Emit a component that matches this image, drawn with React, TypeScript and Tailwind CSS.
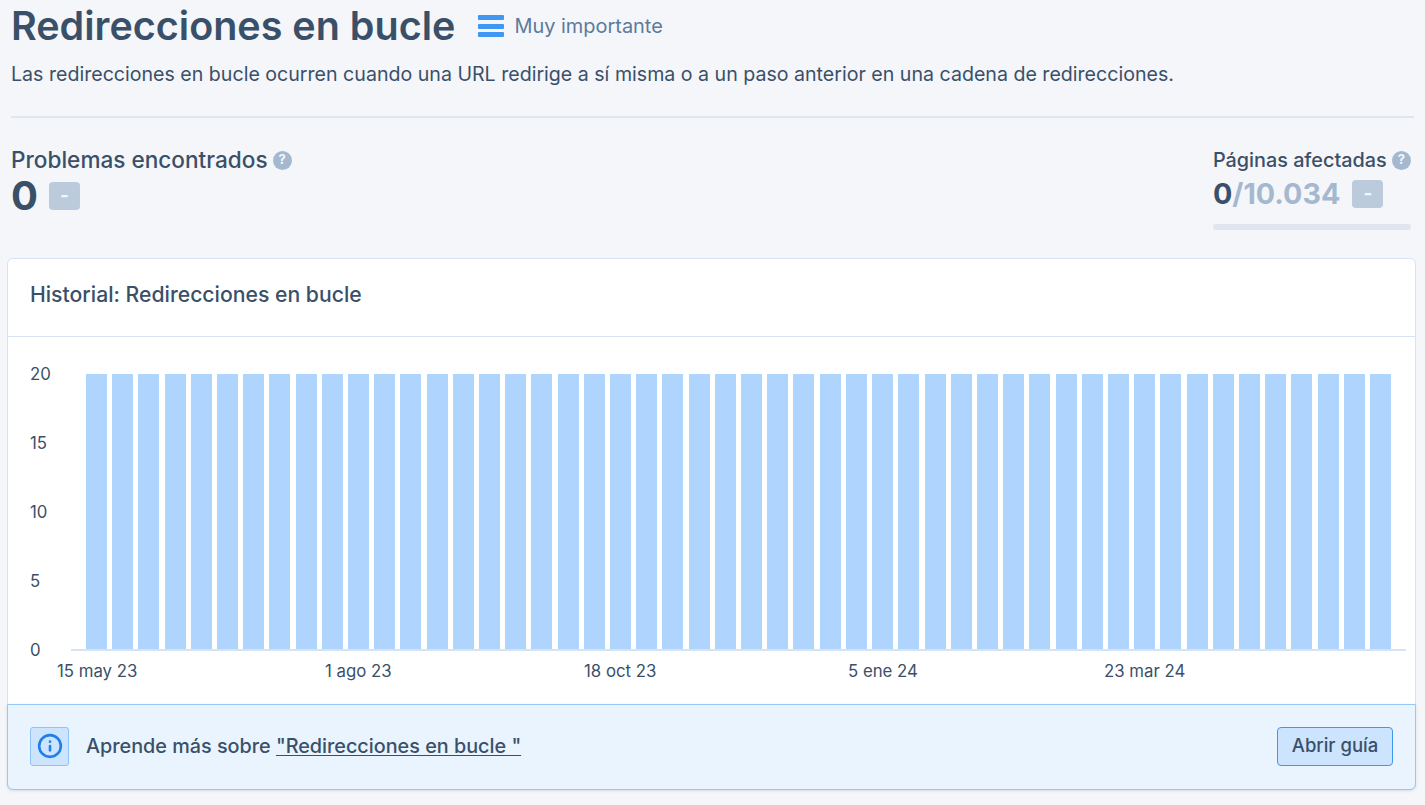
import { Info } from "lucide-react";

const bars = Array.from({ length: 50 });
const yTicks = ["20", "15", "10", "5", "0"];

function Help() {
	return (
		<span className="flex h-[19px] w-[19px] shrink-0 items-center justify-center rounded-full bg-[#a4b8d0] text-[13px] font-bold text-[#f4f6fa]">
			?
		</span>
	);
}

function Dash() {
	return (
		<span className="flex h-[28px] w-[31px] items-center justify-center rounded-[4px] bg-[#bccbdb] text-[19px] font-bold text-[#f4f6fa]">
			-
		</span>
	);
}

export default function App() {
	return (
		<div className="h-[805px] w-[1425px] overflow-hidden bg-[#f4f6fa] font-['Inter',sans-serif] text-[#3a5069]">
			{/* Header */}
			<div className="px-[11px]">
				<div className="flex h-[52px] items-center">
					<h1 className="text-[39.5px] leading-[52px] font-semibold">
						Redirecciones en bucle
					</h1>
					<div className="ml-[23px] flex h-[22px] w-[26px] flex-col justify-between">
						<span className="h-[5px] rounded-[1px] bg-[#4096f3]" />
						<span className="h-[5px] rounded-[1px] bg-[#4096f3]" />
						<span className="h-[5px] rounded-[1px] bg-[#4096f3]" />
					</div>
					<span className="mt-[1px] ml-[10px] text-[19.95px] text-[#5c7a9c]">
						Muy importante
					</span>
				</div>
				<p className="mt-[8px] text-[19.6px] leading-[28px]">
					Las redirecciones en bucle ocurren cuando una URL redirige a sí misma
					o a un paso anterior en una cadena de redirecciones.
				</p>
				<div className="mt-[28px] h-[2px] w-[1403px] bg-[#dfe6f0]" />

				{/* Stats */}
				<div className="mt-[29px] flex w-[1400px] justify-between">
					<div>
						<div className="flex items-center gap-[5px]">
							<span className="text-[22.6px] leading-[26px] font-medium">
								Problemas encontrados
							</span>
							<Help />
						</div>
						<div className="flex items-center gap-[11px]">
							<span className="text-[40px] leading-[46px] font-bold">0</span>
							<Dash />
						</div>
					</div>
					<div className="w-[198px]">
						<div className="flex items-center justify-between">
							<span className="text-[19.8px] leading-[26px] font-medium">
								Páginas afectadas
							</span>
							<Help />
						</div>
						<div className="mt-[3px] flex items-center gap-[12px]">
							<span className="text-[28.7px] leading-[36px] font-bold text-[#a4b8d0]">
								<span className="text-[#3a5069]">0</span>/10.034
							</span>
							<Dash />
						</div>
						<div className="mt-[12px] h-[6px] rounded-[3px] bg-[#dfe6f0]" />
					</div>
				</div>
			</div>

			{/* Card */}
			<div className="mt-[28px] ml-[7px] w-[1409px] rounded-[6px] border border-[#d6e4f2] bg-white">
				<div className="flex h-[78px] items-center border-b border-[#d6e4f2] px-[22px] pb-[5px]">
					<h2 className="text-[21.2px] font-medium">
						Historial: Redirecciones en bucle
					</h2>
				</div>

				{/* Chart */}
				<div className="relative h-[367px] pt-[37px]">
					<div className="flex">
						<div className="ml-[22px] flex h-[276px] w-[41px] flex-col justify-between text-[16.8px]">
							{yTicks.map((t) => (
								<span key={t} className="h-0 leading-0">
									{t}
								</span>
							))}
						</div>
						<div className="flex h-[277px] w-[1335px] justify-between border-b-2 border-[#d6e4f2] px-[15px]">
							{bars.map((_, i) => (
								<div key={i} className="h-full w-[21px] bg-[#afd5ff]" />
							))}
						</div>
					</div>
					<div className="mt-[8px] flex text-[16.8px] leading-[24px]">
						<span className="ml-[49px] w-[268px]">15 may 23</span>
						<span className="w-[259px]">1 ago 23</span>
						<span className="w-[264px]">18 oct 23</span>
						<span className="w-[256px]">5 ene 24</span>
						<span>23 mar 24</span>
					</div>
				</div>

				{/* Guide banner */}
				<div className="-mx-[1px] -mb-[1px] flex h-[86px] items-center rounded-b-[6px] border border-[#94c8fb] bg-[#e9f4ff] px-[22px] pb-[2px] shadow-[0_1px_3px_rgba(60,80,105,0.15)]">
					<div className="flex h-[39px] w-[39px] items-center justify-center rounded-[3px] border border-[#8fc3f7] bg-[#cce4fd]">
						<Info size={26} strokeWidth={2.4} className="text-[#1f7fe5]" />
					</div>
					<p className="mt-[2px] ml-[17px] text-[19.8px] font-medium">
						Aprende más sobre{" "}
						<a href="#" className="underline underline-offset-2">
							"Redirecciones en bucle "
						</a>
					</p>
					<button className="ml-auto h-[39px] w-[116px] rounded-[4px] border border-[#4096f3] bg-[#cce4fd] text-[18.5px] font-medium">
						Abrir guía
					</button>
				</div>
			</div>
		</div>
	);
}
